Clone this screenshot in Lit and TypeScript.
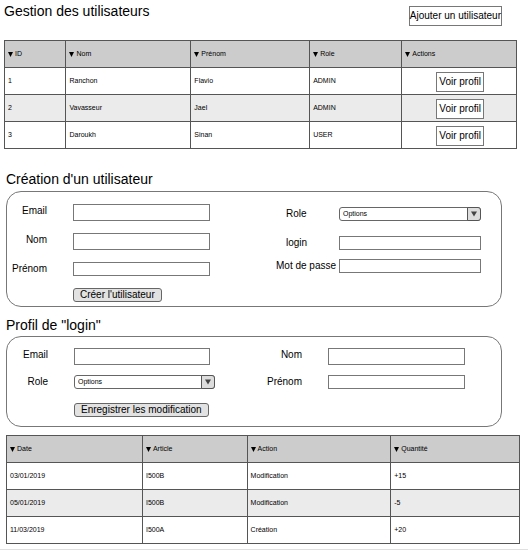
import { LitElement, html, css } from "lit";
import { customElement } from "lit/decorators.js";

interface Column {
  name: string;
  cls: string;
}

const userColumns: Column[] = [
  { name: "ID", cls: "w-id" },
  { name: "Nom", cls: "w-nom" },
  { name: "Prénom", cls: "w-prenom" },
  { name: "Role", cls: "w-role" },
  { name: "Actions", cls: "w-actions" },
];

const users = [
  ["1", "Ranchon", "Flavio", "ADMIN"],
  ["2", "Vavasseur", "Jael", "ADMIN"],
  ["3", "Daroukh", "Sinan", "USER"],
];

const historyColumns: Column[] = [
  { name: "Date", cls: "w-date" },
  { name: "Article", cls: "w-article" },
  { name: "Action", cls: "w-action" },
  { name: "Quantité", cls: "w-quantite" },
];

const history = [
  ["03/01/2019", "I500B", "Modification", "+15"],
  ["05/01/2019", "I500B", "Modification", "-5"],
  ["11/03/2019", "I500A", "Création", "+20"],
];

@customElement("app-root")
export class AppRoot extends LitElement {
  static styles = css`
    :host {
      display: block;
      font-family: "Liberation Sans", Arial, sans-serif;
      font-size: 10px;
      line-height: 12px;
      color: #000;
      background: #fff;
    }
    * {
      box-sizing: border-box;
    }
    .page {
      border-bottom: 1px solid #e0e0e0;
      padding-bottom: 5px;
    }
    h1,
    h2 {
      margin: 0;
      font-size: 14px;
      line-height: 16px;
      font-weight: 400;
    }
    h1 {
      padding-top: 3px;
    }
    h2 {
      margin-left: 6px;
    }
    .top {
      display: flex;
      justify-content: space-between;
      align-items: flex-start;
      padding: 0 26px 0 4px;
      height: 40px;
    }
    button,
    input,
    select {
      font: inherit;
      color: inherit;
      margin: 0;
    }
    .plain {
      height: 20px;
      padding: 0 2px;
      border: 1px solid #777;
      background: #fff;
      white-space: nowrap;
    }
    .top .plain {
      margin-top: 6px;
      padding: 0;
    }
    table {
      border-collapse: collapse;
      table-layout: fixed;
      font-size: 7px;
      line-height: 8px;
    }
    .users {
      width: calc(100% - 15px);
      margin: 0 11px 22px 4px;
    }
    .history {
      width: calc(100% - 14px);
      margin: 8px 8px 0 6px;
    }
    th,
    td {
      height: 27px;
      padding: 0 3px;
      border: 1px solid #555;
      text-align: left;
      font-weight: 400;
    }
    th {
      background: #ccc;
    }
    tbody tr:nth-child(even) {
      background: #ebebeb;
    }
    .sort {
      display: flex;
      align-items: center;
      gap: 2px;
    }
    .actions {
      font-size: 10px;
      text-align: center;
      padding: 2px 0 0 2px;
    }
    .actions .plain {
      display: block;
      margin: 0 auto;
    }
    .w-id { width: 12%; }
    .w-nom { width: 24.4%; }
    .w-prenom { width: 23.2%; }
    .w-role { width: 18%; }
    .w-actions { width: 22.4%; }
    .w-date { width: 26.5%; }
    .w-article { width: 20.4%; }
    .w-action { width: 28%; }
    .w-quantite { width: 25.1%; }
    .panel {
      display: grid;
      grid-template-columns: 1fr 1fr;
      margin: 4px 26px 0 6px;
      padding: 12px 0 4px;
      border: 1px solid #777;
      border-radius: 15px;
    }
    .profile {
      margin-top: 3px;
      padding: 11px 0 9px;
    }
    .creation {
      margin-bottom: 10px;
    }
    .fields {
      display: grid;
      align-content: start;
      row-gap: 12px;
    }
    .profile .fields {
      row-gap: 10px;
    }
    .row {
      display: grid;
      grid-template-columns: 66px 137fr 44fr;
    }
    .profile .left .row {
      grid-template-columns: 67px 142fr 39fr;
    }
    .profile .right .row {
      grid-template-columns: 74px 137fr 36fr;
    }
    .row label {
      text-align: right;
      padding: 1px 26px 0 0;
      white-space: nowrap;
    }
    .creation .right {
      padding-top: 3px;
      row-gap: 9px;
    }
    .creation .right .row {
      grid-template-columns: 85px 142fr 20fr;
      align-items: center;
    }
    .creation .right label {
      text-align: left;
      padding: 0 0 0 22px;
    }
    .creation .right label.short {
      padding-left: 32px;
    }
    .spaced {
      margin-bottom: 6px;
    }
    input {
      display: block;
      width: 100%;
      min-width: 0;
      height: 14px;
      padding: 0 2px;
      border: 1px solid #777;
      border-radius: 0;
      background: #fff;
    }
    .tall {
      height: 17px;
    }
    .profile .left input {
      width: 96%;
    }
    .select {
      position: relative;
      height: 14px;
    }
    select {
      display: block;
      width: 100%;
      height: 14px;
      padding: 0 16px 0 3px;
      appearance: none;
      border: 1px solid #666;
      border-radius: 3px;
      background: #fff;
      font-size: 7px;
      line-height: 12px;
    }
    .arrow {
      position: absolute;
      top: 0;
      right: 0;
      width: 14px;
      height: 14px;
      display: flex;
      align-items: center;
      justify-content: center;
      border: 1px solid #555;
      border-radius: 0 3px 3px 0;
      background: #ddd;
      pointer-events: none;
    }
    .submit {
      grid-column: 2 / -1;
      justify-self: start;
      height: 14px;
      padding: 0 6px;
      border: 1px solid #666;
      border-radius: 3px;
      background: #e2e2e2;
      line-height: 12px;
      white-space: nowrap;
    }
    .profile .submit {
      margin-top: 4px;
    }
  `;

  private head(columns: Column[]) {
    return html`<thead>
      <tr>
        ${columns.map(
          (c) => html`<th class=${c.cls} scope="col">
            <span class="sort">
              <svg width="5" height="5" viewBox="0 0 5 5" aria-hidden="true">
                <path d="M0 0H5L2.5 5Z" fill="#000" />
              </svg>
              ${c.name}
            </span>
          </th>`
        )}
      </tr>
    </thead>`;
  }

  private text(id: string, label: string, cls = "", labelCls = "", rowCls = "") {
    return html`<div class="row ${rowCls}">
      <label class=${labelCls} for=${id}>${label}</label>
      <input class=${cls} id=${id} type="text" />
    </div>`;
  }

  private role(id: string, labelCls = "", rowCls = "") {
    return html`<div class="row ${rowCls}">
      <label class=${labelCls} for=${id}>Role</label>
      <div class="select">
        <select id=${id}>
          <option>Options</option>
        </select>
        <span class="arrow">
          <svg width="6" height="6" viewBox="0 0 6 6" aria-hidden="true">
            <path d="M0 0.5H6L3 5.5Z" fill="#444" />
          </svg>
        </span>
      </div>
    </div>`;
  }

  render() {
    return html`
      <main class="page">
        <header class="top">
          <h1>Gestion des utilisateurs</h1>
          <button class="plain" type="button">Ajouter un utilisateur</button>
        </header>
        <table class="users">
          ${this.head(userColumns)}
          <tbody>
            ${users.map(
              (u) => html`<tr>
                ${u.map((v) => html`<td>${v}</td>`)}
                <td class="actions">
                  <button class="plain" type="button">Voir profil</button>
                </td>
              </tr>`
            )}
          </tbody>
        </table>

        <h2>Création d'un utilisateur</h2>
        <form class="panel creation">
          <div class="fields left">
            ${this.text("new-email", "Email", "tall")}
            ${this.text("new-nom", "Nom", "tall")}
            ${this.text("new-prenom", "Prénom")}
            <div class="row">
              <button class="submit" type="button">Créer l'utilisateur</button>
            </div>
          </div>
          <div class="fields right">
            ${this.role("new-role", "short", "spaced")}
            ${this.text("new-login", "login", "", "short")}
            ${this.text("new-password", "Mot de passe")}
          </div>
        </form>

        <h2>Profil de "login"</h2>
        <form class="panel profile">
          <div class="fields left">
            ${this.text("email", "Email", "tall")}
            ${this.role("role")}
            <div class="row">
              <button class="submit" type="button">Enregistrer les modification</button>
            </div>
          </div>
          <div class="fields right">
            ${this.text("nom", "Nom", "tall")}
            ${this.text("prenom", "Prénom")}
          </div>
        </form>

        <table class="history">
          ${this.head(historyColumns)}
          <tbody>
            ${history.map((r) => html`<tr>${r.map((v) => html`<td>${v}</td>`)}</tr>`)}
          </tbody>
        </table>
      </main>
    `;
  }
}
